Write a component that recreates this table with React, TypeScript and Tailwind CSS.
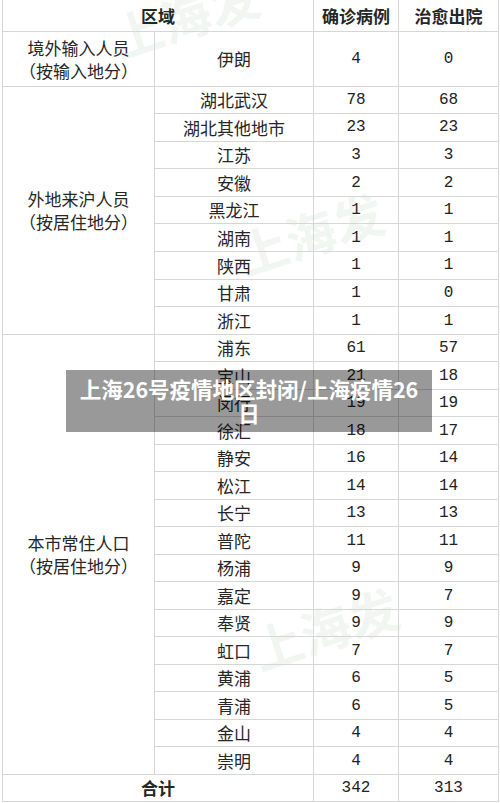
const outside = [
  ["湖北武汉", "78", "68"],
  ["湖北其他地市", "23", "23"],
  ["江苏", "3", "3"],
  ["安徽", "2", "2"],
  ["黑龙江", "1", "1"],
  ["湖南", "1", "1"],
  ["陕西", "1", "1"],
  ["甘肃", "1", "0"],
  ["浙江", "1", "1"],
];

const local = [
  ["浦东", "61", "57"],
  ["宝山", "21", "18"],
  ["闵行", "19", "19"],
  ["徐汇", "18", "17"],
  ["静安", "16", "14"],
  ["松江", "14", "14"],
  ["长宁", "13", "13"],
  ["普陀", "11", "11"],
  ["杨浦", "9", "9"],
  ["嘉定", "9", "7"],
  ["奉贤", "9", "9"],
  ["虹口", "7", "7"],
  ["黄浦", "6", "5"],
  ["青浦", "6", "5"],
  ["金山", "4", "4"],
  ["崇明", "4", "4"],
];

const cjk = "font-['Noto_Sans_CJK_SC',sans-serif]";
const num = "font-['Liberation_Mono','Noto_Sans_CJK_SC',monospace] text-[16px] text-[#222]";
const cell = "border border-[#d6d6d6] text-center p-0";

function Group({ label, rows, rowH }: { label: string; rows: string[][]; rowH: string }) {
  return (
    <>
      {rows.map((r, i) => (
        <tr key={r[0]} className={rowH}>
          {i === 0 && (
            <td rowSpan={rows.length} className={`${cell} leading-[23px]`}>
              {label}
              <br />
              （按居住地分）
            </td>
          )}
          <td className={cell}>{r[0]}</td>
          <td className={`${cell} ${num}`}>{r[1]}</td>
          <td className={`${cell} ${num}`}>{r[2]}</td>
        </tr>
      ))}
    </>
  );
}

export default function App() {
  return (
    <div className={`relative w-[500px] h-[803px] bg-white overflow-hidden ${cjk} text-[17px] text-[#262626]`}>
      {/* watermark */}
      <span className="absolute left-[110px] top-[-22px] -rotate-[18deg] text-[50px] font-bold text-[#f1f6f2] select-none">上海发</span>
      <span className="absolute left-[235px] top-[195px] -rotate-[18deg] text-[50px] font-bold text-[#f1f6f2] select-none">上海发</span>
      <span className="absolute left-[250px] top-[590px] -rotate-[18deg] text-[50px] font-bold text-[#f1f6f2] select-none">上海发</span>

      <table className="relative ml-[2px] w-[496px] table-fixed border-collapse">
        <colgroup>
          <col className="w-[152px]" />
          <col className="w-[159px]" />
          <col className="w-[85px]" />
          <col className="w-[100px]" />
        </colgroup>
        <tbody>
          <tr className="h-[31px] font-bold">
            <td colSpan={2} className={`${cell} border-t-0`}>区域</td>
            <td className={`${cell} border-t-0`}>确诊病例</td>
            <td className={`${cell} border-t-0`}>治愈出院</td>
          </tr>
          <tr className="h-[55px]">
            <td className={`${cell} leading-[23px]`}>
              境外输入人员
              <br />
              （按输入地分）
            </td>
            <td className={cell}>伊朗</td>
            <td className={`${cell} ${num}`}>4</td>
            <td className={`${cell} ${num}`}>0</td>
          </tr>
          <Group label="外地来沪人员" rows={outside} rowH="h-[27.6px]" />
          <Group label="本市常住人口" rows={local} rowH="h-[27.5px]" />
          <tr className="h-[27px]">
            <td colSpan={2} className={`${cell} font-bold`}>合计</td>
            <td className={`${cell} ${num}`}>342</td>
            <td className={`${cell} ${num}`}>313</td>
          </tr>
        </tbody>
      </table>

      {/* title banner */}
      <div className="absolute left-[66px] top-[370px] w-[366px] h-[62px] bg-black/40 flex items-center justify-center px-[10px]">
        <p className="text-white text-[21.5px] font-bold leading-[24px] text-center">上海26号疫情地区封闭/上海疫情26日</p>
      </div>
    </div>
  );
}
